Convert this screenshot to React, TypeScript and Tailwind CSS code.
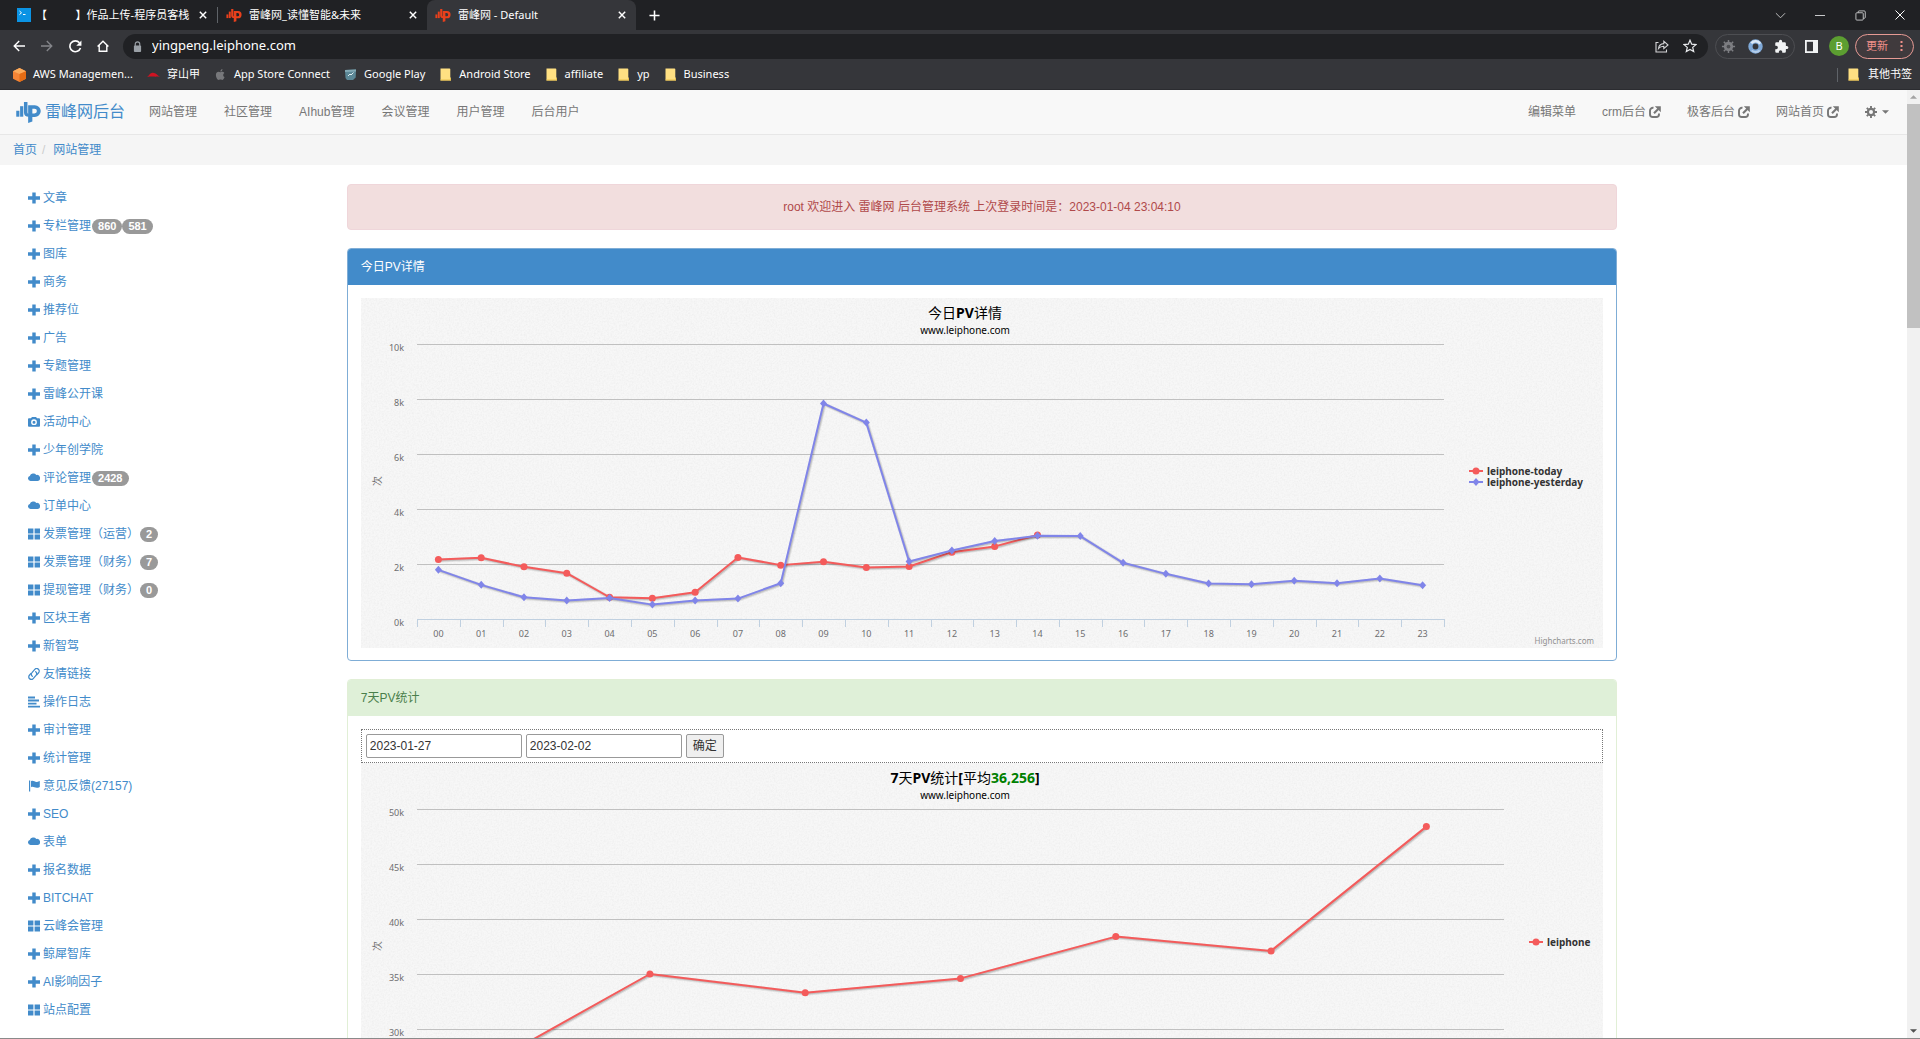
import React, { useEffect, useRef, useState } from "react";

/* ---------- shared drawings ---------- */

function LeiphoneLogo({ className }: { className: string }) {
  return (
    <svg viewBox="0 0 70 60" className={className} fill="currentColor" aria-hidden="true">
      <rect x="0" y="25" width="9" height="17" />
      <rect x="11" y="12" width="9" height="30" />
      <path d="M22 0h10v30q0 4 4 4v8q-14 0-14-12z" />
      <path
        fillRule="evenodd"
        d="M34 9h19a17 17 0 0 1 0 34h-7v13l-12 4zM46 19v14h6a7 7 0 0 0 0-14z"
      />
    </svg>
  );
}

function CloseMark() {
  return (
    <svg viewBox="0 0 10 10" className="size-2" stroke="currentColor" strokeWidth="1.8" aria-hidden="true">
      <path d="M1 1l8 8M9 1l-8 8" />
    </svg>
  );
}

function FolderMark() {
  return (
    <svg viewBox="0 0 13 13" className="size-[13px] shrink-0" aria-hidden="true">
      <path d="M1.500.5h9a.8.8 0 0 1 .8.8v8l.7.7v2.500H1.500z" fill="#ffe082" />
      <path d="M1.500 12.500h10.500V10h-.9v1.500H1.500z" fill="#e8bf4a" />
    </svg>
  );
}

/* ---------- browser frame ---------- */

function Tab({ icon, title, active }: { icon: React.ReactNode; title: string; active?: boolean }) {
  return (
    <div
      className={
        active
          ? "flex w-[209px] items-center gap-1 rounded-t-lg bg-[#35363a] pr-[6px] pl-2 text-white"
          : "flex w-[209px] items-center gap-1 pr-[6px] pl-2 text-white"
      }
    >
      {icon}
      <span className="min-w-0 flex-1 overflow-hidden text-[11px] whitespace-pre">{title}</span>
      <button type="button" aria-label="关闭标签页" className="flex size-4 items-center justify-center">
        <CloseMark />
      </button>
    </div>
  );
}

function TabStrip() {
  return (
    <div className="flex h-[30px] shrink-0 items-stretch bg-[#202124] pl-2 text-white">
      <Tab
        icon={
          <svg viewBox="0 0 14 14" className="mx-px size-[14px] shrink-0" aria-hidden="true">
            <rect width="14" height="14" fill="#0b93e4" />
            <path d="M2.500 3l2 1.800-2 1.800M6 6.500h2.500" stroke="#fff" strokeWidth="1" fill="none" />
          </svg>
        }
        title={"【          】作品上传-程序员客栈"}
      />
      <div className="my-[7px] w-px bg-[#5f6368]" />
      <Tab
        icon={<LeiphoneLogo className="mr-[3px] h-[13px] w-4 shrink-0 text-[#e8401c]" />}
        title="雷峰网_读懂智能&未来"
      />
      <Tab
        active
        icon={<LeiphoneLogo className="mr-[3px] h-[13px] w-4 shrink-0 text-[#e8401c]" />}
        title="雷峰网 - Default"
      />
      <button type="button" aria-label="新标签页" className="ml-[10px] flex w-4 items-center justify-center">
        <svg viewBox="0 0 12 12" className="size-[11px]" stroke="#fff" strokeWidth="1.700" aria-hidden="true">
          <path d="M6 .5v11M.5 6h11" />
        </svg>
      </button>
      <div className="ml-auto flex items-center text-[#c8c9cb]">
        <button type="button" aria-label="搜索标签页" className="flex w-10 items-center justify-center">
          <svg viewBox="0 0 12 12" className="size-[11px]" fill="none" stroke="currentColor" strokeWidth="1">
            <path d="M1 3.500l5 5 5-5" />
          </svg>
        </button>
        <button type="button" aria-label="最小化" className="flex w-10 items-center justify-center">
          <svg viewBox="0 0 10 10" className="size-[10px]" stroke="currentColor" strokeWidth="1">
            <path d="M0 5.500h10" />
          </svg>
        </button>
        <button type="button" aria-label="还原" className="flex w-10 items-center justify-center">
          <svg viewBox="0 0 12 12" className="size-[11px]" fill="none" stroke="currentColor" strokeWidth="1">
            <rect x="1" y="3" width="8" height="8" rx="1" />
            <path d="M3.500 3V2a1 1 0 0 1 1-1H10a1.200 1.200 0 0 1 1.200 1.200V8a1 1 0 0 1-1 1H9" />
          </svg>
        </button>
        <button type="button" aria-label="关闭" className="flex w-10 items-center justify-center text-white">
          <svg viewBox="0 0 10 10" className="size-[10px]" stroke="currentColor" strokeWidth="1">
            <path d="M.5.5l9 9M9.500.5l-9 9" />
          </svg>
        </button>
      </div>
    </div>
  );
}

function Toolbar() {
  return (
    <div className="flex h-8 shrink-0 items-center bg-[#35363a] pr-[6px] pl-[5px] text-white">
      <div className="flex w-28 shrink-0 items-center">
        <button type="button" aria-label="后退" className="flex w-7 justify-center">
          <svg viewBox="0 0 12 12" className="size-3" fill="none" stroke="#fff" strokeWidth="1.400">
            <path d="M12 6H1.200M6.200 1L1.200 6l5 5" />
          </svg>
        </button>
        <button type="button" aria-label="前进" className="flex w-7 justify-center">
          <svg viewBox="0 0 12 12" className="size-3" fill="none" stroke="#85868a" strokeWidth="1.300">
            <path d="M0 6h10.800M5.800 1l5 5-5 5" />
          </svg>
        </button>
        <button type="button" aria-label="重新加载" className="flex w-7 justify-center">
          <svg viewBox="0 0 12 12" className="size-[13px]" fill="none" stroke="#fff" strokeWidth="1.500">
            <path d="M10.600 7.400A5 5 0 1 1 9.700 2.600" />
            <path d="M11.500.4v4.800H6.700z" fill="#fff" stroke="none" />
          </svg>
        </button>
        <button type="button" aria-label="主页" className="flex w-7 justify-center">
          <svg viewBox="0 0 12 12" className="size-3" fill="none" stroke="#fff" strokeWidth="1.400">
            <path d="M.6 6.500L6 1.200l5.400 5.300M2.200 5.300v6h7.600v-6" />
          </svg>
        </button>
      </div>
      <div className="ml-[6px] flex h-[25px] min-w-0 flex-1 items-center rounded-full bg-[#202124] pr-1 pl-[10px]">
        <svg viewBox="0 0 10 12" className="h-[11px] w-[9px] shrink-0" fill="#9aa0a6" aria-hidden="true">
          <rect x="1" y="5" width="8" height="7" rx="1" />
          <path d="M2.500 5.500V3.300a2.500 2.500 0 0 1 5 0v2.200" fill="none" stroke="#9aa0a6" strokeWidth="1.300" />
        </svg>
        <input
          type="text"
          aria-label="地址栏"
          defaultValue="yingpeng.leiphone.com"
          className="ml-[10px] min-w-0 flex-1 bg-transparent text-[13px] text-white outline-none"
        />
        <button type="button" aria-label="分享此页" className="flex w-7 justify-center">
          <svg viewBox="0 0 14 14" className="size-[14px]" fill="none" stroke="#d5d6d8" strokeWidth="1.100">
            <path d="M3.500 3.500H1v9.500h10.500V10.500" />
            <path d="M3.500 9.500c.5-3.500 2.500-4.800 5.300-4.900V2.200L13 6 8.800 9.600V7.200c-2.600 0-4 .6-5.300 2.300z" />
          </svg>
        </button>
        <button type="button" aria-label="收藏" className="flex w-7 justify-center">
          <svg viewBox="0 0 14 14" className="size-[14px]" fill="none" stroke="#e8eaed" strokeWidth="1.200">
            <path d="M7 1.200l1.700 4 4.200.4-3.200 2.800 1 4.200L7 10.400l-3.700 2.200 1-4.200L1.100 5.600l4.200-.4z" />
          </svg>
        </button>
      </div>
      <div className="ml-[7px] flex h-[25px] w-20 items-center justify-between rounded-full border border-[#4d4e52] px-[5px]">
        <svg viewBox="0 0 16 16" className="size-[15px]" fill="#7d7e82" aria-hidden="true">
          <circle cx="8" cy="8" r="5" />
          <path d="M8 1v14M1 8h14M3 3l10 10M13 3L3 13" stroke="#7d7e82" strokeWidth="1.600" />
          <circle cx="8" cy="8" r="2" fill="#4b4c50" />
        </svg>
        <svg viewBox="0 0 16 16" className="size-[15px]" aria-hidden="true">
          <circle cx="8" cy="8" r="5.400" fill="none" stroke="#7fa9d8" strokeWidth="4.600" />
          <path d="M3.500 4.500A6 6 0 0 1 13 5" fill="none" stroke="#dce9f6" strokeWidth="2.600" />
          <path d="M12.500 12A6 6 0 0 1 4 12.200" fill="none" stroke="#b4cde9" strokeWidth="2" />
        </svg>
        <svg viewBox="0 0 24 24" className="size-[15px]" fill="#f1f3f4" aria-hidden="true">
          <path d="M20.500 11H19V7a2 2 0 0 0-2-2h-4V3.500a2.500 2.500 0 0 0-5 0V5H4a2 2 0 0 0-2 2v3.800h1.500a2.700 2.700 0 0 1 0 5.400H2V20a2 2 0 0 0 2 2h3.800v-1.500a2.700 2.700 0 0 1 5.400 0V22H17a2 2 0 0 0 2-2v-4h1.500a2.500 2.500 0 0 0 0-5z" />
        </svg>
      </div>
      <button type="button" aria-label="侧边栏" className="ml-[10px]">
        <svg viewBox="0 0 13 13" className="size-[13px]" aria-hidden="true">
          <rect x=".9" y=".9" width="11.200" height="11.200" fill="none" stroke="#f1f3f4" strokeWidth="1.800" />
          <rect x="8" y="1" width="4" height="11" fill="#f1f3f4" />
        </svg>
      </button>
      <button
        type="button"
        aria-label="用户 B"
        className="ml-[11px] flex size-5 items-center justify-center rounded-full bg-[#5c9e31] text-[11px] text-white"
      >
        B
      </button>
      <button
        type="button"
        className="ml-[6px] flex h-[25px] w-[59px] items-center justify-between rounded-full border border-[#e69a94] bg-[#403a3d] pr-[10px] pl-[10px] text-[11px] text-[#f0908a]"
      >
        更新
        <svg viewBox="0 0 3 12" className="h-3 w-[3px]" fill="#f0908a" aria-hidden="true">
          <rect x=".5" y="1" width="2" height="2" />
          <rect x=".5" y="5" width="2" height="2" />
          <rect x=".5" y="9" width="2" height="2" />
        </svg>
      </button>
    </div>
  );
}

const bookmarks: { label: string; icon: React.ReactNode }[] = [
  {
    label: "AWS Managemen...",
    icon: (
      <svg viewBox="0 0 13 14" className="h-[14px] w-[13px] shrink-0" aria-hidden="true">
        <path d="M6.500 0L13 3.200v7.600L6.500 14 0 10.800V3.200z" fill="#f58536" />
        <path d="M6.500 0L13 3.200 6.500 6 0 3.200z" fill="#fbab5b" />
        <path d="M6.500 6L13 3.200v7.600L6.500 14z" fill="#e46c14" />
      </svg>
    ),
  },
  {
    label: "穿山甲",
    icon: (
      <svg viewBox="0 0 13 13" className="size-[13px] shrink-0" aria-hidden="true">
        <path d="M0 9c1.500-.5 2.500-3.500 4.500-4 1.500-.5 2.500-.2 3.500.3C10 6 11 8 13 9c-2-.3-3-.6-4.500-.2C6 8.400 3 8.600 0 9z" fill="#cf1322" />
      </svg>
    ),
  },
  {
    label: "App Store Connect",
    icon: (
      <svg viewBox="0 0 24 24" className="size-[13px] shrink-0" fill="#77787b" aria-hidden="true">
        <path d="M17 12.700c0-2.400 2-3.600 2.100-3.700-1.200-1.700-3-1.900-3.600-2-1.500-.1-3 .9-3.800.9s-2-.9-3.200-.9C6 7.100 3.500 9 3.500 12.800c0 4 2.700 9.200 5 9.200 1.200 0 1.700-.8 3.200-.8s1.900.8 3.200.8c2 0 3.900-3.400 4.600-5.600-1.700-.7-2.500-2-2.500-3.700zM14.600 5.400c1-1.300 1-2.700.9-3.400-1 .1-2.100.7-2.800 1.500-.7.8-1.200 1.900-1 3.100 1.100.1 2.200-.4 2.900-1.200z" />
      </svg>
    ),
  },
  {
    label: "Google Play",
    icon: (
      <svg viewBox="0 0 13 13" className="size-[13px] shrink-0" aria-hidden="true">
        <path d="M1 2l11-.5-.3 8L9 12H3L1.500 10z" fill="#5b8796" />
        <path d="M1 2l11-.5v2L1 4z" fill="#83aab6" />
        <path d="M4 8l2-2 1 1 2.500-2.500" stroke="#dfeef2" fill="none" />
      </svg>
    ),
  },
  { label: "Android Store", icon: <FolderMark /> },
  { label: "affiliate", icon: <FolderMark /> },
  { label: "yp", icon: <FolderMark /> },
  { label: "Business", icon: <FolderMark /> },
];

function BookmarkBar() {
  return (
    <div className="flex h-7 shrink-0 items-center gap-[14px] border-b border-[#2b2c30] bg-[#35363a] pr-2 pb-[2px] pl-[13px] text-[11px] text-white">
      {bookmarks.map((b) => (
        <a key={b.label} href="#" className="flex items-center gap-[7px] whitespace-nowrap">
          {b.icon}
          {b.label}
        </a>
      ))}
      <div className="ml-auto flex items-center gap-[9px]">
        <div className="h-[14px] w-px bg-[#5f6368]" />
        <a href="#" className="flex items-center gap-2 whitespace-nowrap">
          <FolderMark />
          其他书签
        </a>
      </div>
    </div>
  );
}

/* ---------- site header ---------- */

function ShareMark() {
  return (
    <svg viewBox="0 0 12 12" className="size-3" fill="none" stroke="currentColor" strokeWidth="1.900" aria-hidden="true">
      <path d="M4.500 1.800A3 3 0 0 0 1 4.800v3.400a2.800 2.800 0 0 0 2.800 2.800h3.400a2.800 2.800 0 0 0 2.800-2.800V7.600" />
      <path d="M5 7.200l4.500-4.500" strokeWidth="2.200" />
      <path d="M5.800.3h6v6z" fill="currentColor" stroke="none" />
    </svg>
  );
}

const mainMenu = ["网站管理", "社区管理", "AIhub管理", "会议管理", "用户管理", "后台用户"];
const sideMenu = [
  { label: "编辑菜单", external: false },
  { label: "crm后台", external: true },
  { label: "极客后台", external: true },
  { label: "网站首页", external: true },
];

function Navbar() {
  return (
    <nav className="flex h-[45px] items-center border-b border-[#e7e7e7] bg-[#f8f8f8] pr-[18px] pl-4 text-[#777]">
      <a href="#" className="flex items-center gap-1 text-base text-[#428bca]">
        <LeiphoneLogo className="h-[21px] w-[25px]" />
        雷峰网后台
      </a>
      <div className="ml-6 flex gap-[27px]">
        {mainMenu.map((m) => (
          <a key={m} href="#">
            {m}
          </a>
        ))}
      </div>
      <div className="ml-auto flex items-center gap-[26px]">
        {sideMenu.map((m) => (
          <a key={m.label} href="#" className="flex items-center gap-[3px]">
            {m.label}
            {m.external && <ShareMark />}
          </a>
        ))}
        <button type="button" aria-label="设置" className="flex items-center gap-[5px]">
          <svg viewBox="0 0 12 12" className="size-3" aria-hidden="true">
            <circle cx="6" cy="6" r="3.100" fill="none" stroke="currentColor" strokeWidth="2.200" />
            <path
              d="M6 0v2.200M6 9.800V12M0 6h2.200M9.800 6H12M1.800 1.800l1.500 1.500M8.700 8.700l1.500 1.500M10.200 1.800L8.700 3.300M3.300 8.700l-1.500 1.500"
              stroke="currentColor"
              strokeWidth="1.900"
            />
          </svg>
          <svg viewBox="0 0 8 4" className="h-1 w-[7px]" fill="currentColor" aria-hidden="true">
            <path d="M0 0h8L4 4z" />
          </svg>
        </button>
      </div>
    </nav>
  );
}

function Breadcrumb() {
  return (
    <div className="flex h-[30px] items-center bg-[#f5f5f5] pl-[13px] text-[#428bca]">
      <a href="#">首页</a>
      <span className="px-[5px] text-[#ccc]">/</span>
      <a href="#" className="ml-[3px]">
        网站管理
      </a>
    </div>
  );
}

/* ---------- side navigation ---------- */

type GlyphName = "plus" | "camera" | "cloud" | "grid" | "link" | "align" | "flag";

function Glyph({ name }: { name: GlyphName }) {
  return (
    <svg viewBox="0 0 12 12" className="size-3 shrink-0" fill="currentColor" aria-hidden="true">
      {name === "plus" && <path d="M4.300.5h3.400v3.800H12v3.400H7.700v3.800H4.300V7.700H0V4.300h4.300z" />}
      {name === "camera" && (
        <path
          fillRule="evenodd"
          d="M0 3.200A.9.900 0 0 1 .9 2.300h2L4 1h4l1.100 1.300h2a.9.900 0 0 1 .9.900v6.600a.9.900 0 0 1-.9.900H.9a.9.900 0 0 1-.9-.9zM6 3.300a2.900 2.900 0 1 0 0 5.800 2.900 2.900 0 0 0 0-5.800zm0 1.400a1.500 1.500 0 1 1 0 3 1.500 1.500 0 0 1 0-3z"
        />
      )}
      {name === "cloud" && (
        <path d="M2.500 9A2.500 2.500 0 0 1 1.800 4.100 3.700 3.700 0 0 1 8.300 2.900 3.100 3.100 0 0 1 9.600 9z" />
      )}
      {name === "grid" && <path d="M0 .5h5.400v5H0zM6.600.5H12v5H6.600zM0 6.600h5.400v5H0zM6.600 6.600H12v5H6.600z" />}
      {name === "link" && (
        <g fill="none" stroke="currentColor" strokeWidth="1.300" strokeLinecap="round">
          <path d="M4.300 8.300A2.500 2.500 0 0 1 4 4.600l2.800-3.200a2.500 2.500 0 0 1 3.800 3.300L9 6.600" />
          <path d="M7.700 3.700A2.500 2.500 0 0 1 8 7.400l-2.800 3.200a2.500 2.500 0 0 1-3.800-3.300L3 5.400" />
        </g>
      )}
      {name === "align" && <path d="M0 .5h7v1.900H0zM0 3.600h11v1.900H0zM0 6.700h8.500v1.900H0zM0 9.700h12v1.900H0z" />}
      {name === "flag" && <path d="M1 .5h1.200v11H1zM3 1.200c2.500-1.200 4 1.300 6 .8.900-.2 1.800-.7 2.800-1v6c-2.500 1.300-4 .8-5.300.3S4 6.500 3 7.300z" />}
    </svg>
  );
}

const sideLinks: { icon: GlyphName; label: string; badges?: string[] }[] = [
  { icon: "plus", label: "文章" },
  { icon: "plus", label: "专栏管理", badges: ["860", "581"] },
  { icon: "plus", label: "图库" },
  { icon: "plus", label: "商务" },
  { icon: "plus", label: "推荐位" },
  { icon: "plus", label: "广告" },
  { icon: "plus", label: "专题管理" },
  { icon: "plus", label: "雷峰公开课" },
  { icon: "camera", label: "活动中心" },
  { icon: "plus", label: "少年创学院" },
  { icon: "cloud", label: "评论管理", badges: ["2428"] },
  { icon: "cloud", label: "订单中心" },
  { icon: "grid", label: "发票管理（运营）", badges: ["2"] },
  { icon: "grid", label: "发票管理（财务）", badges: ["7"] },
  { icon: "grid", label: "提现管理（财务）", badges: ["0"] },
  { icon: "plus", label: "区块王者" },
  { icon: "plus", label: "新智驾" },
  { icon: "link", label: "友情链接" },
  { icon: "align", label: "操作日志" },
  { icon: "plus", label: "审计管理" },
  { icon: "plus", label: "统计管理" },
  { icon: "flag", label: "意见反馈(27157)" },
  { icon: "plus", label: "SEO" },
  { icon: "cloud", label: "表单" },
  { icon: "plus", label: "报名数据" },
  { icon: "plus", label: "BITCHAT" },
  { icon: "grid", label: "云峰会管理" },
  { icon: "plus", label: "鲸犀智库" },
  { icon: "plus", label: "AI影响因子" },
  { icon: "grid", label: "站点配置" },
];

function Sidebar() {
  return (
    <aside className="w-1/6 shrink-0 pl-7 text-[#428bca]">
      <ul>
        {sideLinks.map((l) => (
          <li key={l.label}>
            <a href="#" className="flex h-7 items-center whitespace-nowrap">
              <Glyph name={l.icon} />
              <span className="mr-px ml-[3px]">{l.label}</span>
              {l.badges?.map((b) => (
                <span
                  key={b}
                  className="rounded-full bg-[#999] px-[6px] text-[11px] leading-[15px] font-bold text-white"
                >
                  {b}
                </span>
              ))}
            </a>
          </li>
        ))}
      </ul>
    </aside>
  );
}

/* ---------- charts ---------- */

type Series = { name: string; color: string; marker: "circle" | "diamond"; data: number[] };

type ChartProps = {
  id: string;
  title: React.ReactNode;
  marginRight: number;
  min: number;
  step: number;
  categories: string[];
  series: Series[];
  legendOffset: number;
};

const PLOT_TOP = 46;
const PLOT_LEFT = 56;
const ROW = 55;
const ROWS = 5;
const CHART_FONT = "font-['Noto_Sans','Noto_Sans_CJK_SC',sans-serif]";

function Marker({ x, y, s }: { x: number; y: number; s: Series }) {
  return s.marker === "circle" ? (
    <circle cx={x} cy={y} r="3.500" fill={s.color} />
  ) : (
    <path d={`M${x} ${y - 4}L${x + 3.5} ${y}L${x} ${y + 4}L${x - 3.5} ${y}Z`} fill={s.color} />
  );
}

function LineChart({ id, title, marginRight, min, step, categories, series, legendOffset }: ChartProps) {
  const box = useRef<HTMLDivElement>(null);
  const [width, setWidth] = useState(1242);

  useEffect(() => {
    const el = box.current;
    if (!el) return;
    const ro = new ResizeObserver(() => setWidth(el.clientWidth));
    ro.observe(el);
    setWidth(el.clientWidth);
    return () => ro.disconnect();
  }, []);

  const right = width - marginRight;
  const band = (right - PLOT_LEFT) / categories.length;
  const bottom = PLOT_TOP + ROW * ROWS;
  const px = (i: number) => PLOT_LEFT + band * (i + 0.5);
  const py = (v: number) => bottom - ((v - min) / step) * ROW;
  const center = width / 2 - 17;
  const legendTop = 179 - (series.length - 1) * 6;

  return (
    <div ref={box} className="w-full">
      <svg width={width} height={350} className={`block bg-[#f7f7f7] ${CHART_FONT}`} role="img" aria-label={id}>
        <filter id={`${id}-grain`} x="0" y="0" width="100%" height="100%">
          <feTurbulence type="fractalNoise" baseFrequency="0.6" numOctaves="2" seed="4" />
          <feColorMatrix values="0 0 0 0 0.4  0 0 0 0 0.4  0 0 0 0 0.4  0.5 0 0 0 -0.18" />
        </filter>
        <rect width={width} height="350" filter={`url(#${id}-grain)`} opacity="0.4" />

        {Array.from({ length: ROWS }, (_, i) => (
          <path key={i} d={`M${PLOT_LEFT} ${PLOT_TOP + ROW * i + 0.5}H${right}`} stroke="#c0c0c0" />
        ))}
        <path d={`M${PLOT_LEFT} ${bottom + 0.5}H${right}`} stroke="#c0d0e0" />
        {Array.from({ length: categories.length + 1 }, (_, i) => (
          <path key={i} d={`M${Math.round(PLOT_LEFT + band * i) + 0.5} ${bottom}v8`} stroke="#c0d0e0" />
        ))}

        {Array.from({ length: ROWS + 1 }, (_, i) => (
          <text key={i} x="43" y={bottom - ROW * i + 7} textAnchor="end" className="fill-[#6e6e70] text-[9px]">
            {min + step * i}k
          </text>
        ))}
        {categories.map((c, i) => (
          <text key={c} x={px(i)} y={bottom + 18} textAnchor="middle" className="fill-[#6e6e70] text-[9px]">
            {c}
          </text>
        ))}

        <text x={center} y="20" textAnchor="middle" className="fill-black text-[14px]">
          {title}
        </text>
        <text x={center} y="36" textAnchor="middle" className="fill-black text-[10px]">
          www.leiphone.com
        </text>
        <text
          transform="translate(20 183) rotate(-90)"
          textAnchor="middle"
          className="fill-[#707070] text-[10px]"
        >
          次
        </text>

        {series.map((s) => {
          const d = s.data.map((v, i) => `${i ? "L" : "M"}${px(i)} ${py(v)}`).join("");
          return (
            <g key={s.name}>
              <path d={d} transform="translate(1 1)" fill="none" stroke="#000" strokeOpacity="0.08" strokeWidth="4" />
              <path d={d} transform="translate(1 1)" fill="none" stroke="#000" strokeOpacity="0.14" strokeWidth="2" />
              <path d={d} fill="none" stroke={s.color} strokeWidth="2" strokeLinejoin="round" />
              {s.data.map((v, i) => (
                <Marker key={i} x={px(i)} y={py(v)} s={s} />
              ))}
            </g>
          );
        })}

        {series.map((s, i) => {
          const y = legendTop + i * 11;
          const x = width - legendOffset;
          return (
            <g key={s.name}>
              <path d={`M${x - 18} ${y}h14`} stroke={s.color} strokeWidth="2" />
              <Marker x={x - 11} y={y} s={s} />
              <text x={x} y={y + 4} className="fill-[#333] text-[10px] font-bold">
                {s.name}
              </text>
            </g>
          );
        })}

        <text x={width - 9} y="346" textAnchor="end" className="fill-[#909090] text-[8px]">
          Highcharts.com
        </text>
      </svg>
    </div>
  );
}

const today: Series = {
  name: "leiphone-today",
  color: "#f45b5b",
  marker: "circle",
  data: [2.165, 2.226, 1.898, 1.667, 0.791, 0.754, 0.973, 2.238, 1.959, 2.08, 1.873, 1.91, 2.43, 2.64, 3.054],
};
const yesterday: Series = {
  name: "leiphone-yesterday",
  color: "#8085e9",
  marker: "diamond",
  data: [
    1.788, 1.241, 0.791, 0.669, 0.766, 0.523, 0.669, 0.742, 1.302, 7.835, 7.141, 2.092, 2.494, 2.834, 3.029, 3.017,
    2.044, 1.642, 1.29, 1.265, 1.387, 1.302, 1.472, 1.229,
  ],
};
const week: Series = {
  name: "leiphone",
  color: "#f45b5b",
  marker: "circle",
  data: [27.1, 35.0, 33.3, 34.6, 38.4, 37.1, 48.4],
};
const hours = Array.from({ length: 24 }, (_, i) => String(i).padStart(2, "0"));
const days = ["01-27", "01-28", "01-29", "01-30", "01-31", "02-01", "02-02"];

function Main() {
  return (
    <main className="ml-[29px] flex w-2/3 shrink-0 flex-col gap-[18px] pr-px">
      <div className="flex h-[46px] items-center justify-center rounded border border-[#efd6da] bg-[#f2dede] text-[#b0494a]">
        root 欢迎进入 雷峰网 后台管理系统 上次登录时间是：2023-01-04 23:04:10
      </div>

      <section className="overflow-hidden rounded border border-[#7fadd6]">
        <h2 className="flex h-9 items-center bg-[#428bca] px-[13px] text-white">今日PV详情</h2>
        <div className="px-[13px] pt-[13px] pb-3">
          <LineChart
            id="today-pv"
            title={
              <>
                今日<tspan className="font-bold">PV</tspan>详情
              </>
            }
            marginRight={159}
            min={0}
            step={2}
            categories={hours}
            series={[today, yesterday]}
            legendOffset={116}
          />
        </div>
      </section>

      <section className="overflow-hidden rounded border border-[#e1efd6]">
        <h2 className="flex h-9 items-center bg-[#dff0d8] px-[13px] text-[#4a7f4b]">7天PV统计</h2>
        <div className="px-[13px] pt-[13px] pb-[13px]">
          <form
            className="flex items-center gap-1 border border-dotted border-[#777] p-1"
            onSubmit={(e) => e.preventDefault()}
          >
            <input
              type="text"
              aria-label="开始日期"
              defaultValue="2023-01-27"
              className="h-6 w-[156px] rounded-xs border border-[#999] bg-white px-[3px] text-xs text-[#333]"
            />
            <input
              type="text"
              aria-label="结束日期"
              defaultValue="2023-02-02"
              className="h-6 w-[156px] rounded-xs border border-[#999] bg-white px-[3px] text-xs text-[#333]"
            />
            <button
              type="submit"
              className="h-6 rounded-xs border border-[#999] bg-[#efefef] px-[6px] text-xs text-[#333]"
            >
              确定
            </button>
          </form>
          <LineChart
            id="week-pv"
            title={
              <>
                <tspan className="font-bold">7</tspan>天<tspan className="font-bold">PV</tspan>统计
                <tspan className="font-bold">[</tspan>平均
                <tspan className="fill-[#008000] font-bold">36,256</tspan>
                <tspan className="font-bold">]</tspan>
              </>
            }
            marginRight={99}
            min={25}
            step={5}
            categories={days}
            series={[week]}
            legendOffset={56}
          />
        </div>
      </section>
    </main>
  );
}

function Scrollbar() {
  return (
    <div className="flex w-[13px] shrink-0 flex-col items-center bg-[#f1f1f1]" aria-hidden="true">
      <svg viewBox="0 0 8 4" className="my-[5px] h-1 w-[7px] shrink-0" fill="#a3a3a3">
        <path d="M0 4h8L4 0z" />
      </svg>
      <div className="h-[23.600%] w-full bg-[#c1c1c1]" />
      <svg viewBox="0 0 8 4" className="mt-auto mb-[5px] h-1 w-[7px] shrink-0" fill="#505050">
        <path d="M0 0h8L4 4z" />
      </svg>
    </div>
  );
}

export default function App() {
  return (
    <div className="flex h-screen flex-col overflow-hidden border-b border-[#8a8a8a] bg-white font-['Noto_Sans','Noto_Sans_CJK_SC',sans-serif]">
      <TabStrip />
      <Toolbar />
      <BookmarkBar />
      <div className="flex min-h-0 flex-1">
        <div className="min-w-0 flex-1 overflow-hidden font-['Liberation_Sans','Noto_Sans_CJK_SC',sans-serif] text-xs">
          <Navbar />
          <Breadcrumb />
          <div className="flex pt-[19px]">
            <Sidebar />
            <Main />
          </div>
        </div>
        <Scrollbar />
      </div>
    </div>
  );
}
